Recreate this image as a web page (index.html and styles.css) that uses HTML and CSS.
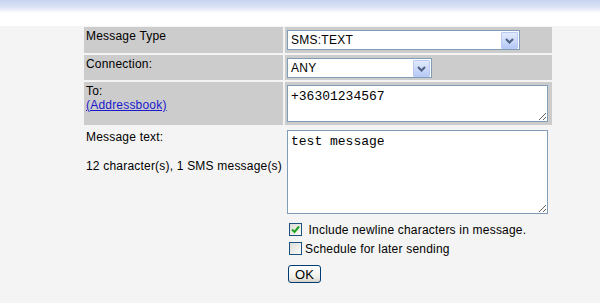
FILE: index.html
```html
<!DOCTYPE html>
<html>
<head>
  <title>Send SMS</title>
  <link rel="stylesheet" href="styles.css">
</head>
<body>
  <div class="topbar"></div>

  <form class="sendform">
    <div class="label row-gray">Message Type</div>
    <div class="value row-gray pad3">
      <span class="select wide">
        <select>
          <option>SMS:TEXT</option>
        </select>
        <span class="arrow"><svg width="15" height="15" viewBox="0 0 15 15"><polyline points="4,6 7.5,9.5 11,6" fill="none" stroke="#4d6185" stroke-width="2"/></svg></span>
      </span>
    </div>

    <div class="label row-gray">Connection:</div>
    <div class="value row-gray pad3b2">
      <span class="select narrow">
        <select>
          <option>ANY</option>
        </select>
        <span class="arrow"><svg width="15" height="15" viewBox="0 0 15 15"><polyline points="4,6 7.5,9.5 11,6" fill="none" stroke="#4d6185" stroke-width="2"/></svg></span>
      </span>
    </div>

    <div class="label row-gray">To:<br><a href="#">(Addressbook)</a></div>
    <div class="value row-gray pad3">
      <textarea class="to">+36301234567</textarea>
    </div>

    <div class="label msglabel">
      <div>Message text:</div>
      <p class="counter">12 character(s), 1 SMS message(s)</p>
    </div>
    <div class="value msgvalue">
      <textarea class="msg">test message</textarea>
    </div>

    <div class="label"></div>
    <div class="value options">
      <label class="check"><span class="box checked"><svg width="11" height="11" viewBox="0 0 11 11"><polyline points="2,5.5 4.5,8 9,2.5" fill="none" stroke="#21a121" stroke-width="2"/></svg></span>&nbsp;Include newline characters in message.</label>
      <label class="check"><span class="box"></span>Schedule for later sending</label>
      <button type="button" class="okbtn">OK</button>
    </div>
  </form>
</body>
</html>
```
FILE: styles.css
```css
body {
  margin: 0;
  background-color: #f4f4f4;
  font-family: "Liberation Sans", Arial, sans-serif;
  font-size: 12px;
  line-height: 14px;
  letter-spacing: 0.2px;
  color: #000;
}

.topbar {
  height: 26px;
  background: linear-gradient(#c6d3f0 0, #dbe3f5 7px, #f2f5fb 11px, #fff 13px, #fff 100%);
}

.sendform {
  display: grid;
  grid-template-columns: 199px 267px;
  column-gap: 2px;
  row-gap: 2px;
  width: 468px;
  margin: 1px 0 0 84px;
}

.row-gray {
  background-color: #cccccc;
}

.label {
  padding: 2px 2px 0 2px;
}

.label a {
  color: #1a1acc;
}

.value {
  padding: 0 2px;
}

.pad3 {
  padding-top: 3px;
  padding-bottom: 3px;
}

.pad3b2 {
  padding-top: 3px;
  padding-bottom: 2px;
}

.select {
  display: flex;
  align-items: center;
  height: 18px;
  border: 1px solid #7f9db9;
  background-color: #fff;
}

.select.wide {
  width: 231px;
}

.select.narrow {
  width: 143px;
}

.select select {
  flex: 1;
  min-width: 0;
  height: 18px;
  border: none;
  outline: none;
  padding: 0 0 0 3px;
  margin: 0;
  background: transparent;
  appearance: none;
  -webkit-appearance: none;
  font-family: "Liberation Sans", Arial, sans-serif;
  font-size: 12px;
  letter-spacing: 0.25px;
  color: #000;
}

.arrow {
  display: flex;
  align-items: center;
  justify-content: center;
  width: 15px;
  height: 15px;
  margin-right: 1px;
  border: 1px solid #b9cbf3;
  border-radius: 1px;
  background: linear-gradient(#e2eafd, #b7c9f6);
}

textarea {
  display: block;
  box-sizing: border-box;
  width: 261px;
  margin: 0;
  padding: 3px;
  border: 1px solid #7f9db9;
  background-color: #fff;
  font-family: "Liberation Mono", "Courier New", monospace;
  font-size: 13px;
  line-height: 15px;
  letter-spacing: 0;
  color: #000;
}

textarea.to {
  height: 37px;
}

textarea.msg {
  height: 84px;
}

.msglabel {
  padding-top: 3px;
}

.counter {
  margin: 15px 0 0 0;
  white-space: nowrap;
}

.msgvalue {
  padding-top: 3px;
  padding-bottom: 1px;
}

.options {
  display: flex;
  flex-direction: column;
  align-items: flex-start;
  padding-top: 3px;
  padding-bottom: 20px;
}

.check {
  display: flex;
  align-items: center;
  height: 19px;
}

.box {
  display: flex;
  align-items: center;
  justify-content: center;
  box-sizing: border-box;
  width: 13px;
  height: 13px;
  margin: 0 3px 0 2px;
  border: 1px solid #1c5180;
  background: linear-gradient(135deg, #dcdcd7, #fbfbf9);
}

.okbtn {
  margin: 7px 0 0 1px;
  box-sizing: border-box;
  width: 33px;
  height: 18px;
  padding: 0;
  border: 1px solid #003c74;
  border-radius: 3px;
  background: linear-gradient(#ffffff, #f0f0ea 70%, #d6d0c5);
  font-family: "Liberation Sans", Arial, sans-serif;
  font-size: 13px;
  color: #000;
}
```
